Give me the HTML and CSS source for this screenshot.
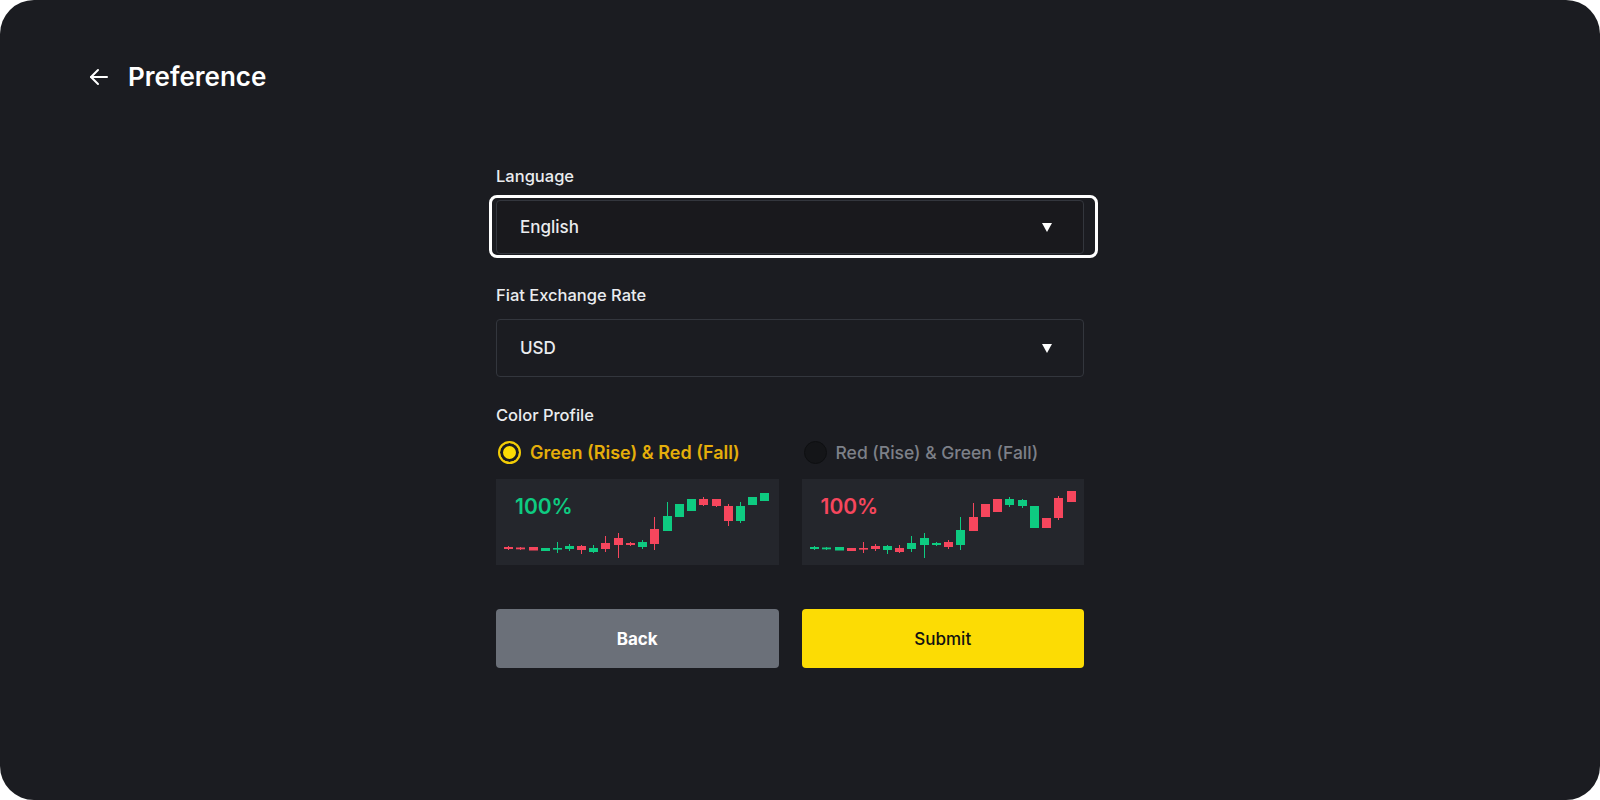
FILE: index.html
```html
<!DOCTYPE html>
<html lang="en">
<head>
<meta charset="utf-8">
<title>Preference</title>
<link rel="stylesheet" href="styles.css">
</head>
<body>
<div class="panel">
  <header class="header">
    <svg class="back-icon" width="24" height="24" viewBox="0 0 24 24" fill="none" stroke="#ffffff" stroke-width="2" stroke-linecap="round" stroke-linejoin="round"><path d="M20 12H4"/><path d="M11 5l-7 7 7 7"/></svg>
    <h1 class="title">Preference</h1>
  </header>

  <main class="form">
    <div class="field">
      <div class="label">Language</div>
      <div class="select select-lang focused">
        <span class="value">English</span>
        <span class="caret"></span>
      </div>
    </div>

    <div class="field field-fiat">
      <div class="label">Fiat Exchange Rate</div>
      <div class="select select-fiat">
        <span class="value">USD</span>
        <span class="caret"></span>
      </div>
    </div>

    <div class="field field-color">
      <div class="label">Color Profile</div>
      <div class="options">
        <div class="option">
          <div class="radio-row active">
            <span class="radio"></span>
            <span class="radio-text">Green (Rise) &amp; Red (Fall)</span>
          </div>
          <div class="chart">
            <span class="pct up">100%</span>
            <svg class="candles" width="282" height="86" viewBox="0 0 282 86">
              <g stroke-width="1">
                <line x1="12.5" y1="67" x2="12.5" y2="71" stroke="#f6465d"/><rect x="8" y="68" width="9" height="2" fill="#f6465d"/>
                <line x1="24.5" y1="68" x2="24.5" y2="71" stroke="#f6465d"/><rect x="20" y="68.5" width="9" height="1.8" fill="#f6465d"/>
                <rect x="33" y="68" width="9" height="3.5" fill="#f6465d"/>
                <rect x="45" y="69" width="9" height="3" fill="#0ecb81"/>
                <line x1="61.5" y1="63" x2="61.5" y2="74" stroke="#0ecb81"/><rect x="57" y="69" width="9" height="1.6" fill="#0ecb81"/>
                <line x1="73.5" y1="65" x2="73.5" y2="72" stroke="#0ecb81"/><rect x="69" y="67" width="9" height="3" fill="#0ecb81"/>
                <line x1="85.5" y1="66" x2="85.5" y2="75" stroke="#f6465d"/><rect x="81" y="67" width="9" height="4" fill="#f6465d"/>
                <line x1="97.5" y1="66" x2="97.5" y2="74" stroke="#0ecb81"/><rect x="93" y="69" width="9" height="4" fill="#0ecb81"/>
                <line x1="109.5" y1="57" x2="109.5" y2="73" stroke="#f6465d"/><rect x="105" y="64" width="9" height="6" fill="#f6465d"/>
                <line x1="122.5" y1="54" x2="122.5" y2="79" stroke="#f6465d"/><rect x="118" y="59" width="9" height="7" fill="#f6465d"/>
                <line x1="134.5" y1="63" x2="134.5" y2="67" stroke="#f6465d"/><rect x="130" y="64" width="9" height="2" fill="#f6465d"/>
                <line x1="146.5" y1="61" x2="146.5" y2="70" stroke="#0ecb81"/><rect x="142" y="63" width="9" height="5" fill="#0ecb81"/>
                <line x1="158.5" y1="38" x2="158.5" y2="71" stroke="#f6465d"/><rect x="154" y="50" width="9" height="15" fill="#f6465d"/>
                <line x1="171.5" y1="23" x2="171.5" y2="52" stroke="#0ecb81"/><rect x="167" y="37" width="9" height="15" fill="#0ecb81"/>
                <rect x="179" y="25" width="9" height="13" fill="#0ecb81"/>
                <rect x="191" y="20" width="9" height="12" fill="#0ecb81"/>
                <line x1="207.5" y1="18" x2="207.5" y2="27" stroke="#f6465d"/><rect x="203" y="20" width="9" height="6" fill="#f6465d"/>
                <line x1="220.5" y1="20" x2="220.5" y2="28" stroke="#f6465d"/><rect x="216" y="20" width="9" height="7" fill="#f6465d"/>
                <line x1="232.5" y1="25" x2="232.5" y2="47" stroke="#f6465d"/><rect x="228" y="27" width="9" height="15" fill="#f6465d"/>
                <line x1="244.5" y1="23" x2="244.5" y2="44" stroke="#0ecb81"/><rect x="240" y="27" width="9" height="15" fill="#0ecb81"/>
                <rect x="252" y="18" width="9" height="8" fill="#0ecb81"/>
                <rect x="264" y="14" width="9" height="8" fill="#0ecb81"/>
              </g>
            </svg>
          </div>
        </div>

        <div class="option">
          <div class="radio-row">
            <span class="radio"></span>
            <span class="radio-text">Red (Rise) &amp; Green (Fall)</span>
          </div>
          <div class="chart">
            <span class="pct down">100%</span>
            <svg class="candles" width="282" height="86" viewBox="0 0 282 86">
              <g stroke-width="1">
                <line x1="12.5" y1="67" x2="12.5" y2="71" stroke="#0ecb81"/><rect x="8" y="68" width="9" height="2" fill="#0ecb81"/>
                <line x1="24.5" y1="68" x2="24.5" y2="71" stroke="#0ecb81"/><rect x="20" y="68.5" width="9" height="1.8" fill="#0ecb81"/>
                <rect x="33" y="68" width="9" height="3.5" fill="#0ecb81"/>
                <rect x="45" y="69" width="9" height="3" fill="#f6465d"/>
                <line x1="61.5" y1="63" x2="61.5" y2="74" stroke="#f6465d"/><rect x="57" y="69" width="9" height="1.6" fill="#f6465d"/>
                <line x1="73.5" y1="65" x2="73.5" y2="72" stroke="#f6465d"/><rect x="69" y="67" width="9" height="3" fill="#f6465d"/>
                <line x1="85.5" y1="66" x2="85.5" y2="75" stroke="#0ecb81"/><rect x="81" y="67" width="9" height="4" fill="#0ecb81"/>
                <line x1="97.5" y1="66" x2="97.5" y2="74" stroke="#f6465d"/><rect x="93" y="69" width="9" height="4" fill="#f6465d"/>
                <line x1="109.5" y1="57" x2="109.5" y2="73" stroke="#0ecb81"/><rect x="105" y="64" width="9" height="6" fill="#0ecb81"/>
                <line x1="122.5" y1="54" x2="122.5" y2="79" stroke="#0ecb81"/><rect x="118" y="59" width="9" height="7" fill="#0ecb81"/>
                <line x1="134.5" y1="63" x2="134.5" y2="67" stroke="#0ecb81"/><rect x="130" y="64" width="9" height="2" fill="#0ecb81"/>
                <line x1="146.5" y1="61" x2="146.5" y2="70" stroke="#f6465d"/><rect x="142" y="63" width="9" height="5" fill="#f6465d"/>
                <line x1="158.5" y1="38" x2="158.5" y2="71" stroke="#0ecb81"/><rect x="154" y="51" width="9" height="15" fill="#0ecb81"/>
                <line x1="171.5" y1="24" x2="171.5" y2="52" stroke="#f6465d"/><rect x="167" y="38" width="9" height="14" fill="#f6465d"/>
                <rect x="179" y="25" width="9" height="13" fill="#f6465d"/>
                <rect x="191" y="20" width="9" height="13" fill="#f6465d"/>
                <line x1="207.5" y1="18" x2="207.5" y2="28" stroke="#0ecb81"/><rect x="203" y="20" width="9" height="6" fill="#0ecb81"/>
                <line x1="220.5" y1="20" x2="220.5" y2="29" stroke="#0ecb81"/><rect x="216" y="21" width="9" height="6" fill="#0ecb81"/>
                <rect x="228" y="27" width="9" height="22" fill="#0ecb81"/>
                <rect x="240" y="39" width="9" height="10" fill="#f6465d"/>
                <line x1="256.5" y1="17" x2="256.5" y2="41" stroke="#f6465d"/><rect x="252" y="19" width="9" height="20" fill="#f6465d"/>
                <rect x="265" y="12" width="9" height="11" fill="#f6465d"/>
              </g>
            </svg>
          </div>
        </div>
      </div>
    </div>

    <div class="buttons">
      <button class="btn btn-back" type="button">Back</button>
      <button class="btn btn-submit" type="button">Submit</button>
    </div>
  </main>
</div>
</body>
</html>
```

FILE: styles.css
```css
* { box-sizing: border-box; }

html, body {
  margin: 0;
  padding: 0;
  background: #ffffff;
}

body {
  font-family: Inter, "Noto Sans", "Liberation Sans", sans-serif;
  color: #eaecef;
}

.panel {
  width: 1600px;
  height: 800px;
  background: #1b1c21;
  border-radius: 34px;
  overflow: hidden;
}

.header {
  display: flex;
  align-items: center;
  gap: 17px;
  padding: 61px 0 0 87px;
  height: 93px;
}

.back-icon { display: block; }

.title {
  margin: 0;
  font-size: 26px;
  font-weight: 600;
  line-height: 32px;
  color: #ffffff;
}

.form {
  width: 588px;
  margin: 73px 0 0 496px;
}

.label {
  font-size: 16.5px;
  font-weight: 500;
  line-height: 20px;
  color: #eaecef;
}

.select {
  display: flex;
  align-items: center;
  justify-content: space-between;
  margin-top: 14px;
  padding: 0 31px 0 23px;
  border: 1px solid #33363d;
  border-radius: 4px;
  background: #1b1c21;
}

.select-lang {
  height: 54px;
  background: #19191d;
}

.select-fiat { height: 58px; }

.focused { position: relative; }

.focused::after {
  content: "";
  position: absolute;
  left: -8px;
  right: -15px;
  top: -6px;
  bottom: -5px;
  border: 3px solid #ffffff;
  border-radius: 8px;
  pointer-events: none;
}

.value {
  font-size: 17px;
  font-weight: 500;
  color: #eaecef;
}

.caret {
  width: 0;
  height: 0;
  border-left: 5.5px solid transparent;
  border-right: 5.5px solid transparent;
  border-top: 9px solid #ffffff;
}

.field-fiat { margin-top: 31px; }

.field-color { margin-top: 28px; }

.options {
  display: flex;
  gap: 23px;
  margin-top: 15px;
}

.option { width: 283px; }

.radio-row {
  display: flex;
  align-items: center;
  gap: 9px;
  height: 24px;
  padding-left: 2px;
}

.radio {
  width: 23px;
  height: 23px;
  border-radius: 50%;
  background: #141518;
  border: 1px solid #0e0f11;
  flex: none;
}

.active .radio {
  background: #fcdc04;
  border: 2px solid #f2cc06;
  box-shadow: inset 0 0 0 3px #1b1c21;
}

.radio-text {
  font-size: 17.5px;
  font-weight: 500;
  color: #7d8088;
}

.active .radio-text {
  font-size: 18px;
  font-weight: 600;
  color: #e5ae0a;
}

.chart {
  position: relative;
  margin-top: 15px;
  height: 86px;
  background: #24262c;
}

.pct {
  position: absolute;
  left: 19px;
  top: 16px;
  font-size: 21px;
  font-weight: 600;
  line-height: 24px;
}

.pct.up { color: #0ecb81; }
.pct.down { color: #f6465d; }

.candles { display: block; }

.buttons {
  display: flex;
  gap: 23px;
  margin-top: 44px;
}

.btn {
  width: 283px;
  height: 59px;
  border: none;
  border-radius: 4px;
  font-family: inherit;
  font-size: 17px;
  cursor: pointer;
}

.btn-back {
  background: #6b7079;
  color: #ffffff;
  font-weight: 700;
}

.btn-submit {
  background: #fcdc04;
  color: #111111;
  font-weight: 500;
}
```
